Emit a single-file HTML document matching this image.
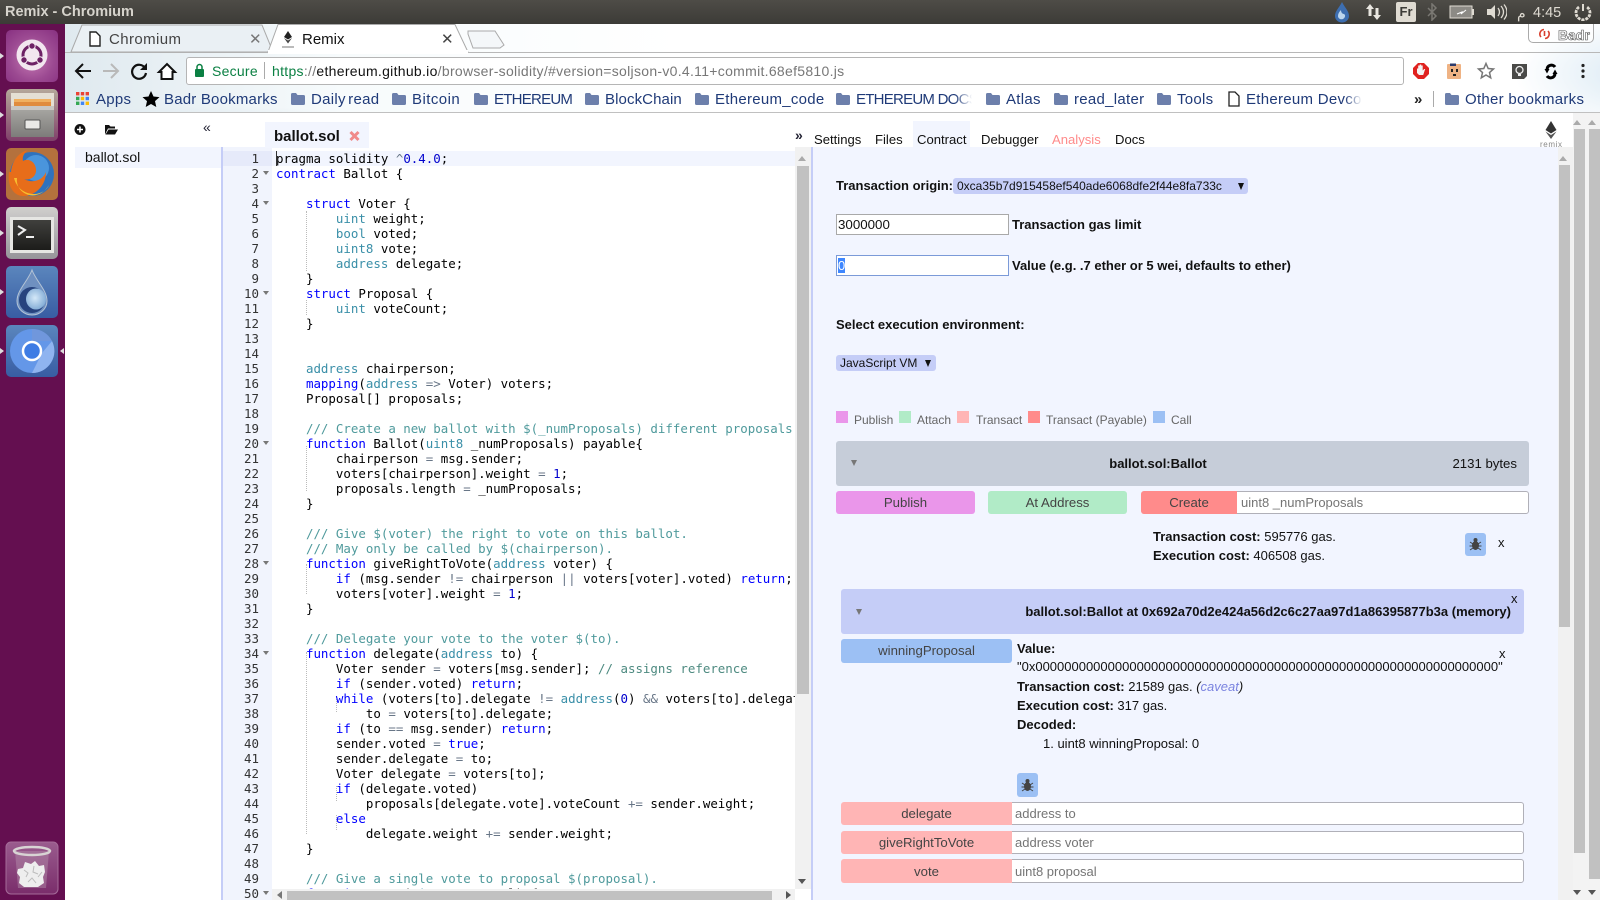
<!DOCTYPE html>
<html><head><meta charset="utf-8"><title>Remix - Chromium</title>
<style>
html,body{margin:0;padding:0;width:1600px;height:900px;overflow:hidden;background:#fff}
body{font-family:"Liberation Sans",sans-serif;position:relative}
.a{position:absolute}
.t{position:absolute;white-space:nowrap;line-height:20px;height:20px;font-size:13px;color:#111}
.b{font-weight:bold}
.bm{position:absolute;white-space:nowrap;line-height:20px;top:90px;font-size:15px;letter-spacing:.28px;color:#1f3a78}
.f{position:absolute;top:93px;width:14px;height:12px}
.c{position:absolute;left:276px;height:15px;line-height:15px;white-space:pre;font-family:"DejaVu Sans Mono",monospace;font-size:12.45px;color:#000}
.n{position:absolute;left:223px;width:36px;text-align:right;height:15px;line-height:15px;font-family:"DejaVu Sans Mono",monospace;font-size:12.45px;color:#333}
.k{color:#0000ff}.y{color:#3a8fa8}.d{color:#4f9a9c}.o{color:#687687}.m{color:#0000cd}.g{color:#4d8a80}
.fd{position:absolute;left:263px;width:0;height:0;border-left:3px solid transparent;border-right:3px solid transparent;border-top:4px solid #777}
.gd{position:absolute;width:0;border-left:1px dotted #bbb}
.btn{position:absolute;text-align:center;color:#444;font-size:13.2px;line-height:23px;height:23px;border-radius:3px}
.inp{position:absolute;background:#fff;border:1px solid #b0b0b8;box-sizing:border-box;color:#757575;font-size:13px;line-height:21px;border-radius:0 3px 3px 0}
.ar{position:absolute;width:0;height:0;border-left:4px solid transparent;border-right:4px solid transparent}
.tb{position:absolute;white-space:nowrap;line-height:20px;height:20px;font-size:13.1px;color:#111;top:130px}
</style></head><body>

<!-- top panel -->
<div class="a" style="left:0;top:0;width:1600px;height:24px;background:linear-gradient(#4e4c47,#3c3b37)"></div>
<div class="t" style="left:5px;top:2px;font-size:14.5px;font-weight:bold;color:#d6d3cc">Remix - Chromium</div>
<svg class="a" style="left:1332px;top:1px" width="20" height="22" viewBox="0 0 20 22"><path d="M10 1C7 7 3 10 3 15a7 6.500 0 0 0 14 0C17 10 13 7 10 1z" fill="#3d6eb0"/><path d="M9 9c-2 2-3 4-3 6s2 4 5 3c2-1 3-4 1-5-2 0-3-2-3-4z" fill="#bcd6ee"/></svg>
<svg class="a" style="left:1364px;top:3px" width="20" height="18" viewBox="0 0 20 18"><path d="M6 1l4 5H7.500v7h-3V6H2zM13 17l-4-5h2.500V5h3v7H17z" fill="#e8e6e0"/></svg>
<div class="a" style="left:1396px;top:2px;width:20px;height:20px;background:#dfdbd2;border-radius:2px;color:#3c3b37;font-size:13px;font-weight:bold;text-align:center;line-height:20px">Fr</div>
<svg class="a" style="left:1426px;top:3px" width="12" height="18" viewBox="0 0 12 18"><path d="M2 5l8 8-4 4V1l4 4-8 8" fill="none" stroke="#7a7873" stroke-width="1.500"/></svg>
<svg class="a" style="left:1449px;top:5px" width="26" height="14" viewBox="0 0 26 14"><rect x="1" y="1" width="22" height="12" fill="#8c8a85" stroke="#dfdbd2"/><rect x="23" y="4" width="2" height="6" fill="#dfdbd2"/><path d="M8 9l5-2-1 2 5-4" stroke="#fff" fill="none"/></svg>
<svg class="a" style="left:1486px;top:4px" width="21" height="16" viewBox="0 0 21 16"><path d="M1 5h4l4-4v14l-4-4H1z" fill="#dfdbd2"/><path d="M12 4q3 4 0 8M15 2q5 6 0 12M18 0.500q6 7.500 0 15" stroke="#dfdbd2" fill="none" stroke-width="1.300"/></svg>
<div class="t" style="left:1517px;top:3px;font-size:14px;color:#dfdbd2;font-family:'Liberation Sans','Noto Sans CJK SC',sans-serif">م</div>
<div class="t" style="left:1533px;top:3px;font-size:14.5px;color:#dfdbd2">4:45</div>
<svg class="a" style="left:1574px;top:3px" width="18" height="18" viewBox="0 0 18 18"><path d="M9 1v7" stroke="#dfdbd2" stroke-width="2"/><path d="M5 4a7 7 0 1 0 8 0" fill="none" stroke="#dfdbd2" stroke-width="2.800" stroke-dasharray="3 1"/></svg>

<!-- launcher -->
<div class="a" style="left:0;top:24px;width:65px;height:876px;background:#640f50"></div>
<svg class="a" style="left:0;top:24px" width="65" height="876" viewBox="0 24 65 876">
<defs><radialGradient id="ub" cx=".5" cy=".55" r=".7"><stop offset="0" stop-color="#c77bb5"/><stop offset=".6" stop-color="#9c4a92"/><stop offset="1" stop-color="#8a3383"/></radialGradient>
<linearGradient id="fi" x1="0" y1="0" x2="0" y2="1"><stop offset="0" stop-color="#b5a89a"/><stop offset="1" stop-color="#80406a"/></linearGradient>
<linearGradient id="bl" x1="0" y1="0" x2="0" y2="1"><stop offset="0" stop-color="#5b86bd"/><stop offset="1" stop-color="#385da3"/></linearGradient>
<linearGradient id="tm" x1="0" y1="0" x2="0" y2="1"><stop offset="0" stop-color="#d0cfcd"/><stop offset="1" stop-color="#96949a"/></linearGradient>
<linearGradient id="sc" x1="0" y1="0" x2="0" y2="1"><stop offset="0" stop-color="#40403d"/><stop offset="1" stop-color="#1c1c1a"/></linearGradient>
<linearGradient id="cb" x1="0" y1="0" x2="0" y2="1"><stop offset="0" stop-color="#a5a4a0"/><stop offset="1" stop-color="#7d7c7a"/></linearGradient>
<radialGradient id="dl" cx=".45" cy=".45" r=".6"><stop offset="0" stop-color="#d4e8f8"/><stop offset="1" stop-color="#7fa9d4"/></radialGradient>
<linearGradient id="tr" x1="0" y1="0" x2="0" y2="1"><stop offset="0" stop-color="#9a5c8e"/><stop offset="1" stop-color="#7a2d6b"/></linearGradient></defs>
<rect x="6" y="30" width="52" height="52" rx="5" fill="url(#ub)"/>
<circle cx="32" cy="55" r="15.500" fill="#f2e6ef"/><circle cx="32" cy="55" r="9" fill="none" stroke="#6d2165" stroke-width="3"/><circle cx="32" cy="46" r="3.200" fill="#6d2165" stroke="#f2e6ef"/><circle cx="24" cy="60" r="3.200" fill="#6d2165" stroke="#f2e6ef"/><circle cx="40" cy="60" r="3.200" fill="#6d2165" stroke="#f2e6ef"/>
<rect x="6" y="89" width="52" height="52" rx="5" fill="url(#fi)"/>
<rect x="11" y="93" width="43" height="17" fill="#e4dfd4"/><rect x="14" y="99" width="37" height="3" fill="#f0b060"/><rect x="14" y="102" width="37" height="4" fill="#e08c3e"/><rect x="11" y="106" width="43" height="4" fill="#c9c7c3"/><rect x="11" y="110" width="43" height="27" fill="url(#cb)"/><rect x="25" y="120" width="15" height="9" rx="1" fill="#e9e9e7" stroke="#555"/>
<rect x="6" y="148" width="52" height="52" rx="5" fill="#b4713d"/>
<circle cx="32" cy="174" r="22" fill="#2f72bd"/><circle cx="36" cy="168" r="13" fill="#4a95dc"/>
<path d="M11 172c1-11 8-20 17-22-4 3-6 7-5 11 5-3 12 0 13 8 1 7-6 12-12 10 9 5 19 1 22-7 0 14-11 24-23 24-8 0-16-8-14-24z" fill="#e76d1a"/><path d="M14 178c2 9 10 16 20 16 7 0 13-4 15-9-4 7-12 12-20 10-8-2-13-9-12-17z" fill="#f8bd2e"/>
<rect x="6" y="207" width="52" height="52" rx="5" fill="url(#tm)"/>
<rect x="10" y="217" width="44" height="36" fill="#e6e6e3"/><rect x="13" y="220" width="38" height="30" fill="url(#sc)"/><path d="M18 226l7 4-7 5" fill="none" stroke="#eee" stroke-width="2"/><rect x="26" y="236" width="8" height="2" fill="#eee"/>
<rect x="6" y="266" width="52" height="52" rx="5" fill="url(#bl)"/>
<path d="M32 270c-4 11-15 20-15 31a15 14 0 0 0 30 0c0-11-11-20-15-31z" fill="#6f90c0" stroke="#b4c4d6"/><ellipse cx="32" cy="300" rx="13" ry="13" fill="#27437e"/><ellipse cx="36" cy="299" rx="10" ry="10.500" fill="url(#dl)"/>
<rect x="6" y="325" width="52" height="52" rx="5" fill="url(#bl)"/>
<circle cx="32" cy="351" r="22" fill="#6497e8"/><path d="M32 329a22 22 0 0 1 20 12H32z" fill="#7097dc"/><path d="M52 341a22 22 0 0 1-20 32l10-20z" fill="#8fb4f0"/><circle cx="32" cy="351" r="9" fill="#3e7ce4" stroke="#fff" stroke-width="2.500"/>
<rect x="6" y="842" width="52" height="52" rx="5" fill="url(#tr)" stroke="#a56b99"/>
<path d="M15 851h34l-3 37H18z" fill="#b592ad" opacity=".45"/><ellipse cx="32" cy="851" rx="18" ry="4" fill="none" stroke="#d8d4d4" stroke-width="2.500"/>
<path d="M18 869l5-1 2-6 6 2 4-3 4 5 5-1 1 7-2 5 1 6-6 4H24l-5-4 1-6-3-4z" fill="#eeeeee"/><path d="M24 870l4 3-2 4M34 866l-1 6 5 2M28 882l4-4 4 5M42 872l-4 5" fill="none" stroke="#bdbdbd"/>
<path d="M0 53l4 3-4 3zM0 112l4 3-4 3zM0 171l4 3-4 3zM0 230l4 3-4 3zM0 289l4 3-4 3zM0 348l4 3-4 3z" fill="#ddd"/><path d="M64 348l-4 3 4 3z" fill="#ddd"/>
</svg>

<!-- chrome background -->
<div class="a" style="left:65px;top:24px;width:1535px;height:89px;background:radial-gradient(ellipse 130px 60px at 1580px 50px,#d8e8f3,transparent),radial-gradient(ellipse 60px 40px at 1480px 108px,#eef4f8,transparent),radial-gradient(ellipse 200px 26px at 150px 108px,#dbe6ec,transparent),linear-gradient(90deg,#dfe9ef,#f7fbfc 18%,#fff 40%)"></div>
<div class="a" style="left:65px;top:112px;width:1535px;height:1px;background:#c0c0c0"></div>
<div class="a" style="left:65px;top:52px;width:1535px;height:1px;background:#b8b8b8"></div>

<svg class="a" style="left:65px;top:24px" width="440" height="30" viewBox="65 24 440 30">
<path d="M71 52L82 25H262L271 47 268 52z" fill="#eaf0f4" stroke="#aaa"/>
<path d="M268 52l10-27.500H455l13 27.500" fill="#fff" stroke="#aaa"/>
<rect x="268" y="50" width="200" height="4" fill="#fff"/>
<path d="M468 31h27l9 14-4 3h-27l-5-14z" fill="#f4f7f9" stroke="#aaa"/>
</svg>
<svg class="a" style="left:89px;top:31px" width="12" height="16" viewBox="0 0 12 16"><path d="M1 1h6l4 4v10H1z" fill="#fff" stroke="#222" stroke-width="1.400"/></svg>
<div class="t" style="left:109px;top:30px;font-size:15px;letter-spacing:.4px;color:#444">Chromium</div>
<div class="t" style="left:249px;top:30px;font-size:15px;color:#777">✕</div>
<svg class="a" style="left:280px;top:31px" width="16" height="18" viewBox="0 0 16 18"><path d="M8 0l4 6-4 2.500L4 6z" fill="#222"/><path d="M8 9.500l4-2.500-4 5.500L4 7z" fill="#444"/><rect x="2" y="15" width="12" height="2" fill="#bbb"/></svg>
<div class="t" style="left:302px;top:30px;font-size:15px;color:#111">Remix</div>
<div class="t" style="left:441px;top:30px;font-size:15px;color:#444">✕</div>

<!-- Badr -->
<div class="a" style="left:1528px;top:24px;width:66px;height:19px;box-sizing:border-box;border:1px solid #aaa;border-top:0;border-radius:0 0 5px 5px;background:rgba(255,255,255,.75)"></div>
<svg class="a" style="left:1538px;top:28px" width="13" height="12" viewBox="0 0 13 12"><path d="M3 9A4.500 4.500 0 0 1 6 1.500M10 3a4.500 4.500 0 0 1-3 7.500M6.500 3v5" fill="none" stroke="#d8402f" stroke-width="1.600"/></svg>
<div class="t" style="left:1558px;top:25px;font-size:14px;font-weight:bold;color:#fff;-webkit-text-stroke:.6px #555">Badr</div>

<!-- toolbar -->
<svg class="a" style="left:74px;top:61px" width="108" height="20" viewBox="0 0 108 20">
<path d="M17 10H3M9 3l-7 7 7 7" fill="none" stroke="#111" stroke-width="2"/>
<path d="M29 10h14M37 3l7 7-7 7" fill="none" stroke="#b9b9b9" stroke-width="2"/>
<path d="M71 7a7 7 0 1 0 1 5" fill="none" stroke="#111" stroke-width="2.200"/><path d="M73 2v7h-7z" fill="#111"/>
<path d="M85 11l8-8 8 8h-2.500v7h-11v-7z" fill="#fff" stroke="#111" stroke-width="2"/>
</svg>
<div class="a" style="left:186px;top:57px;width:1218px;height:28px;box-sizing:border-box;background:#fff;border:1px solid #b5b5b5;border-radius:3px"></div>
<svg class="a" style="left:194px;top:63px" width="11" height="15" viewBox="0 0 11 15"><path d="M3 6V4a2.500 2.500 0 0 1 5 0v2" fill="none" stroke="#0b8043" stroke-width="1.500"/><rect x="1" y="6" width="9" height="8" rx="1" fill="#0b8043"/></svg>
<div class="t" style="left:212px;top:61px;font-size:14px;color:#0b8043;letter-spacing:.25px">Secure</div>
<div class="a" style="left:264px;top:62px;width:1px;height:17px;background:#aaa"></div>
<div class="t" style="left:272px;top:61px;font-size:14px;letter-spacing:.295px;color:#777"><span style="color:#0b8043">https</span><span style="color:#777">://</span><span style="color:#111">ethereum.github.io</span>/browser-solidity/#version=soljson-v0.4.11+commit.68ef5810.js</div>

<svg class="a" style="left:1412px;top:61px" width="180" height="20" viewBox="0 0 180 20">
<path d="M6 2h6l5 5v6l-5 5H6l-5-5V7z" fill="#e0221f"/><path d="M5 12V7.500h1.200V10 4.500h1.500V9 3.500h1.500V9 4.500h1.500V9.500l1.500-1.500h1l-2 6H7z" fill="#f3f3f3"/>
<rect x="35" y="3" width="14" height="15" rx="1" fill="#efb384"/><path d="M38 2.500h6V5h-6z" fill="#2d3b6b"/><rect x="39" y="8" width="2" height="3" fill="#222"/><rect x="44" y="8" width="2" height="3" fill="#222"/><rect x="41" y="13" width="3" height="2" fill="#222"/>
<path d="M74 2.500l2.200 5 5.300.5-4 3.500 1.200 5.300L74 14l-4.700 2.800 1.200-5.300-4-3.500 5.300-.5z" fill="#fff" stroke="#777" stroke-width="1.500"/>
<path d="M100 3h15v12l-3 3h-12z" fill="#4a4a48"/><circle cx="107.500" cy="9" r="3.500" fill="none" stroke="#eee" stroke-width="1.300"/><rect x="106" y="13" width="3" height="2" fill="#eee"/>
<path d="M143 6C141 3 135 3.500 135 9M135 15C137 18 143 17.500 143 12" fill="none" stroke="#000" stroke-width="3"/><path d="M132.500 8h5l-2.500 4.500zM140.500 13h5L143 8.500z" fill="#000"/>
<circle cx="171" cy="4.500" r="1.600" fill="#222"/><circle cx="171" cy="10" r="1.600" fill="#222"/><circle cx="171" cy="15.500" r="1.600" fill="#222"/>
</svg>

<!-- bookmarks -->
<svg class="a" style="left:76px;top:92px" width="13" height="13" viewBox="0 0 13 13"><rect x="0" y="0" width="3.400" height="3.400" fill="#ea4335"/><rect x="4.800" y="0" width="3.400" height="3.400" fill="#ea4335"/><rect x="9.600" y="0" width="3.400" height="3.400" fill="#ea4335"/><rect x="0" y="4.800" width="3.400" height="3.400" fill="#34a853"/><rect x="4.800" y="4.800" width="3.400" height="3.400" fill="#fbbc05"/><rect x="9.600" y="4.800" width="3.400" height="3.400" fill="#4285f4"/><rect x="0" y="9.600" width="3.400" height="3.400" fill="#34a853"/><rect x="4.800" y="9.600" width="3.400" height="3.400" fill="#4285f4"/><rect x="9.600" y="9.600" width="3.400" height="3.400" fill="#fbbc05"/></svg>
<div class="bm" style="left:96px">Apps</div>
<svg class="a" style="left:142px;top:90px" width="18" height="18" viewBox="0 0 18 18"><path d="M9 1l2.500 5.500 6 .6-4.500 4 1.300 5.900L9 14l-5.300 3 1.300-5.900-4.500-4 6-.6z" fill="#000"/></svg>
<div class="bm" style="left:164px;letter-spacing:.2px">Badr Bookmarks</div>
<svg width="0" height="0" style="position:absolute"><defs><symbol id="fo" viewBox="0 0 14 12"><path d="M0 1.500Q0 0 1.500 0H5l1.500 2H12.500Q14 2 14 3.500V10.500Q14 12 12.500 12H1.500Q0 12 0 10.500z" fill="#6c7fab"/></symbol></defs></svg>
<svg class="f" style="left:291px"><use href="#fo"/></svg><div class="bm" style="left:311px;word-spacing:-2px">Daily read</div>
<svg class="f" style="left:392px"><use href="#fo"/></svg><div class="bm" style="left:412px;letter-spacing:.45px">Bitcoin</div>
<svg class="f" style="left:474px"><use href="#fo"/></svg><div class="bm" style="left:494px;letter-spacing:-.75px">ETHEREUM</div>
<svg class="f" style="left:585px"><use href="#fo"/></svg><div class="bm" style="left:605px;letter-spacing:.1px">BlockChain</div>
<svg class="f" style="left:695px"><use href="#fo"/></svg><div class="bm" style="left:715px">Ethereum_code</div>
<svg class="f" style="left:836px"><use href="#fo"/></svg><div class="bm" style="left:856px;width:116px;overflow:hidden;letter-spacing:-.75px;-webkit-mask-image:linear-gradient(90deg,#000 85%,transparent)">ETHEREUM DOCS</div>
<svg class="f" style="left:986px"><use href="#fo"/></svg><div class="bm" style="left:1006px">Atlas</div>
<svg class="f" style="left:1054px"><use href="#fo"/></svg><div class="bm" style="left:1074px">read_later</div>
<svg class="f" style="left:1157px"><use href="#fo"/></svg><div class="bm" style="left:1177px">Tools</div>
<svg class="a" style="left:1228px;top:91px" width="12" height="16" viewBox="0 0 12 16"><path d="M1 1h6l4 4v10H1z" fill="#fff" stroke="#222" stroke-width="1.300"/></svg>
<div class="bm" style="left:1246px;width:116px;overflow:hidden;-webkit-mask-image:linear-gradient(90deg,#000 85%,transparent)">Ethereum Devcon</div>
<div class="t" style="left:1414px;top:90px;font-size:15px;font-weight:bold;color:#222">»</div>
<div class="a" style="left:1433px;top:91px;width:1px;height:16px;background:#aaa"></div>
<svg class="f" style="left:1445px"><use href="#fo"/></svg><div class="bm" style="left:1465px">Other bookmarks</div>

<!-- file panel -->
<svg class="a" style="left:74px;top:123px" width="52" height="13" viewBox="0 0 52 13"><circle cx="6" cy="6.500" r="5.500" fill="#111"/><path d="M6 3.500v6M3 6.500h6" stroke="#fff" stroke-width="1.500"/><path d="M31 2h4l1.500 1.500H41v2H34l-3 6z" fill="#111"/><path d="M34.500 6.500H44l-3 5H31.500z" fill="#111"/></svg>
<div class="t" style="left:203px;top:117px;font-size:14px;color:#223">«</div>
<div class="a" style="left:75px;top:147px;width:146px;height:21px;background:#f2f5fe"></div>
<div class="t" style="left:85px;top:147px;font-size:14px;color:#111">ballot.sol</div>
<div class="a" style="left:221px;top:147px;width:2px;height:753px;background:#c5cdf7"></div>
<div class="a" style="left:223px;top:147px;width:49px;height:753px;background:#f1f4fd"></div>
<div class="a" style="left:265px;top:122px;width:104px;height:26px;background:#f2f5fe"></div>
<div class="t" style="left:274px;top:127px;font-size:15px;font-weight:bold;color:#111">ballot.sol</div>
<svg class="a" style="left:349px;top:130px" width="11" height="12" viewBox="0 0 11 12"><path d="M1.500 2L9.500 10M9.500 2L1.500 10" stroke="#f08a8a" stroke-width="3"/></svg>

<!-- editor -->
<div class="a" style="left:223px;top:151px;width:49px;height:15px;background:#e6eafa"></div>
<div class="a" style="left:272px;top:151px;width:523px;height:15px;background:#f2f5fe"></div>
<div class="a" style="left:276px;top:151px;width:1px;height:15px;background:#333"></div>
<div id="code" class="a" style="left:0;top:0;width:795px;height:889px;overflow:hidden">
<div class="gd" style="left:306px;top:211px;height:60px"></div><div class="gd" style="left:306px;top:300px;height:15px"></div><div class="gd" style="left:306px;top:446px;height:45px"></div>
<div class="gd" style="left:306px;top:564px;height:30px"></div><div class="gd" style="left:306px;top:652px;height:182px"></div>
<div class="gd" style="left:336px;top:697px;height:15px"></div><div class="gd" style="left:336px;top:786px;height:15px"></div><div class="gd" style="left:336px;top:815px;height:15px"></div>
<div class="n" style="top:151px">1</div><div class="c" style="top:151px">pragma solidity <span class="o">^</span><span class="m">0.4.0</span>;</div>
<div class="n" style="top:166px">2</div><div class="c" style="top:166px"><span class="k">contract</span> Ballot {</div><div class="fd" style="top:171px"></div>
<div class="n" style="top:181px">3</div>
<div class="n" style="top:196px">4</div><div class="c" style="top:196px">    <span class="k">struct</span> Voter {</div><div class="fd" style="top:201px"></div>
<div class="n" style="top:211px">5</div><div class="c" style="top:211px">        <span class="y">uint</span> weight;</div>
<div class="n" style="top:226px">6</div><div class="c" style="top:226px">        <span class="y">bool</span> voted;</div>
<div class="n" style="top:241px">7</div><div class="c" style="top:241px">        <span class="y">uint8</span> vote;</div>
<div class="n" style="top:256px">8</div><div class="c" style="top:256px">        <span class="y">address</span> delegate;</div>
<div class="n" style="top:271px">9</div><div class="c" style="top:271px">    }</div>
<div class="n" style="top:286px">10</div><div class="c" style="top:286px">    <span class="k">struct</span> Proposal {</div><div class="fd" style="top:291px"></div>
<div class="n" style="top:301px">11</div><div class="c" style="top:301px">        <span class="y">uint</span> voteCount;</div>
<div class="n" style="top:316px">12</div><div class="c" style="top:316px">    }</div>
<div class="n" style="top:331px">13</div>
<div class="n" style="top:346px">14</div>
<div class="n" style="top:361px">15</div><div class="c" style="top:361px">    <span class="y">address</span> chairperson;</div>
<div class="n" style="top:376px">16</div><div class="c" style="top:376px">    <span class="k">mapping</span>(<span class="y">address</span> <span class="o">=&gt;</span> Voter) voters;</div>
<div class="n" style="top:391px">17</div><div class="c" style="top:391px">    Proposal[] proposals;</div>
<div class="n" style="top:406px">18</div>
<div class="n" style="top:421px">19</div><div class="c d" style="top:421px">    /// Create a new ballot with $(_numProposals) different proposals.</div>
<div class="n" style="top:436px">20</div><div class="c" style="top:436px">    <span class="k">function</span> Ballot(<span class="y">uint8</span> _numProposals) payable{</div><div class="fd" style="top:441px"></div>
<div class="n" style="top:451px">21</div><div class="c" style="top:451px">        chairperson <span class="o">=</span> msg.sender;</div>
<div class="n" style="top:466px">22</div><div class="c" style="top:466px">        voters[chairperson].weight <span class="o">=</span> <span class="m">1</span>;</div>
<div class="n" style="top:481px">23</div><div class="c" style="top:481px">        proposals.length <span class="o">=</span> _numProposals;</div>
<div class="n" style="top:496px">24</div><div class="c" style="top:496px">    }</div>
<div class="n" style="top:511px">25</div>
<div class="n" style="top:526px">26</div><div class="c d" style="top:526px">    /// Give $(voter) the right to vote on this ballot.</div>
<div class="n" style="top:541px">27</div><div class="c d" style="top:541px">    /// May only be called by $(chairperson).</div>
<div class="n" style="top:556px">28</div><div class="c" style="top:556px">    <span class="k">function</span> giveRightToVote(<span class="y">address</span> voter) {</div><div class="fd" style="top:561px"></div>
<div class="n" style="top:571px">29</div><div class="c" style="top:571px">        <span class="k">if</span> (msg.sender <span class="o">!=</span> chairperson <span class="o">||</span> voters[voter].voted) <span class="k">return</span>;</div>
<div class="n" style="top:586px">30</div><div class="c" style="top:586px">        voters[voter].weight <span class="o">=</span> <span class="m">1</span>;</div>
<div class="n" style="top:601px">31</div><div class="c" style="top:601px">    }</div>
<div class="n" style="top:616px">32</div>
<div class="n" style="top:631px">33</div><div class="c d" style="top:631px">    /// Delegate your vote to the voter $(to).</div>
<div class="n" style="top:646px">34</div><div class="c" style="top:646px">    <span class="k">function</span> delegate(<span class="y">address</span> to) {</div><div class="fd" style="top:651px"></div>
<div class="n" style="top:661px">35</div><div class="c" style="top:661px">        Voter sender <span class="o">=</span> voters[msg.sender]; <span class="g">// assigns reference</span></div>
<div class="n" style="top:676px">36</div><div class="c" style="top:676px">        <span class="k">if</span> (sender.voted) <span class="k">return</span>;</div>
<div class="n" style="top:691px">37</div><div class="c" style="top:691px">        <span class="k">while</span> (voters[to].delegate <span class="o">!=</span> <span class="y">address</span>(<span class="m">0</span>) <span class="o">&amp;&amp;</span> voters[to].delegate <span class="o">!=</span> msg.sender)</div>
<div class="n" style="top:706px">38</div><div class="c" style="top:706px">            to <span class="o">=</span> voters[to].delegate;</div>
<div class="n" style="top:721px">39</div><div class="c" style="top:721px">        <span class="k">if</span> (to <span class="o">==</span> msg.sender) <span class="k">return</span>;</div>
<div class="n" style="top:736px">40</div><div class="c" style="top:736px">        sender.voted <span class="o">=</span> <span class="k">true</span>;</div>
<div class="n" style="top:751px">41</div><div class="c" style="top:751px">        sender.delegate <span class="o">=</span> to;</div>
<div class="n" style="top:766px">42</div><div class="c" style="top:766px">        Voter delegate <span class="o">=</span> voters[to];</div>
<div class="n" style="top:781px">43</div><div class="c" style="top:781px">        <span class="k">if</span> (delegate.voted)</div>
<div class="n" style="top:796px">44</div><div class="c" style="top:796px">            proposals[delegate.vote].voteCount <span class="o">+=</span> sender.weight;</div>
<div class="n" style="top:811px">45</div><div class="c" style="top:811px">        <span class="k">else</span></div>
<div class="n" style="top:826px">46</div><div class="c" style="top:826px">            delegate.weight <span class="o">+=</span> sender.weight;</div>
<div class="n" style="top:841px">47</div><div class="c" style="top:841px">    }</div>
<div class="n" style="top:856px">48</div>
<div class="n" style="top:871px">49</div><div class="c d" style="top:871px">    /// Give a single vote to proposal $(proposal).</div>
<div class="c" style="top:886px">    <span class="k">function</span> vote(<span class="y">uint8</span> proposal) {</div>
</div>
<div class="n" style="top:886px">50</div><div class="fd" style="top:891px"></div>
<!-- editor scrollbars -->
<div class="a" style="left:795px;top:147px;width:16px;height:742px;background:#f1f1f1"></div>
<div class="ar" style="left:798px;top:156px;border-bottom:5px solid #aaa"></div>
<div class="a" style="left:797px;top:166px;width:12px;height:528px;background:#c1c1c1"></div>
<div class="ar" style="left:798px;top:879px;border-top:5px solid #555"></div>
<div class="a" style="left:272px;top:889px;width:523px;height:11px;background:#f1f1f1"></div>
<div class="a" style="left:287px;top:891px;width:485px;height:9px;background:#c1c1c1"></div>
<div class="a" style="left:277px;top:891px;width:0;height:0;border-top:4px solid transparent;border-bottom:4px solid transparent;border-right:5px solid #777"></div>
<div class="a" style="left:786px;top:891px;width:0;height:0;border-top:4px solid transparent;border-bottom:4px solid transparent;border-left:5px solid #555"></div>

<!-- right panel -->
<div class="a" style="left:811px;top:147px;width:2px;height:753px;background:#c5cdf7"></div>
<div class="a" style="left:813px;top:147px;width:745px;height:753px;background:#f2f5ff"></div>
<div class="a" style="left:913px;top:121px;width:57px;height:26px;background:#f2f5fe"></div>
<div class="t" style="left:795px;top:125px;font-size:14px;font-weight:bold;color:#223">»</div>
<div class="tb" style="left:814px">Settings</div>
<div class="tb" style="left:875px">Files</div>
<div class="tb" style="left:917px">Contract</div>
<div class="tb" style="left:981px">Debugger</div>
<div class="tb" style="left:1052px;color:#ff8b8b">Analysis</div>
<div class="tb" style="left:1115px">Docs</div>
<svg class="a" style="left:1540px;top:120px" width="22" height="26" viewBox="0 0 22 26"><path d="M11 1l5.500 9L11 13.500 5.500 10z" fill="#333"/><path d="M11 15l5.500-3.500L11 19l-5.500-7.500z" fill="#555"/></svg>
<div class="t" style="left:1540px;top:135px;font-size:8px;letter-spacing:.6px;color:#888">remix</div>

<!-- outer scrollbars -->
<div class="a" style="left:1558px;top:147px;width:15px;height:753px;background:#f1f1f1"></div>
<div class="ar" style="left:1559px;top:156px;border-bottom:5px solid #aaa"></div>
<div class="a" style="left:1559px;top:165px;width:11px;height:462px;background:#c1c1c1"></div>
<div class="a" style="left:1573px;top:113px;width:27px;height:787px;background:#f3f3f3"></div>
<div class="ar" style="left:1573px;top:120px;border-bottom:5px solid #aaa"></div>
<div class="ar" style="left:1588px;top:120px;border-bottom:5px solid #aaa"></div>
<div class="a" style="left:1574px;top:129px;width:11px;height:724px;background:#c1c1c1"></div>
<div class="a" style="left:1589px;top:129px;width:11px;height:750px;background:#c1c1c1"></div>
<div class="ar" style="left:1573px;top:890px;border-top:5px solid #555"></div>
<div class="ar" style="left:1588px;top:890px;border-top:5px solid #555"></div>

<!-- form -->
<div class="t b" style="left:836px;top:176px">Transaction origin:</div>
<div class="a" style="left:953px;top:178px;width:295px;height:16px;background:#c5cdf7;border-radius:3px"></div>
<div class="t" style="left:957px;top:176px;font-size:12px">0xca35b7d915458ef540ade6068dfe2f44e8fa733c</div>
<div class="ar" style="left:1238px;top:183px;border-left-width:3px;border-right-width:3px;border-top:7px solid #111"></div>
<div class="a" style="left:836px;top:214px;width:173px;height:21px;box-sizing:border-box;border:1px solid #a9a9a9;background:#fff"></div>
<div class="t" style="left:838px;top:215px;font-size:13.33px">3000000</div>
<div class="t b" style="left:1012px;top:215px">Transaction gas limit</div>
<div class="a" style="left:836px;top:255px;width:173px;height:21px;box-sizing:border-box;border:1px solid #7b9ad8;background:#fff"></div>
<div class="a" style="left:838px;top:258px;width:7px;height:15px;background:#3f87ff"></div>
<div class="t" style="left:838px;top:256px;color:#fff">0</div>
<div class="t b" style="left:1012px;top:256px">Value (e.g. .7 ether or 5 wei, defaults to ether)</div>
<div class="t b" style="left:836px;top:315px">Select execution environment:</div>
<div class="a" style="left:836px;top:355px;width:100px;height:16px;background:#c5cdf7;border-radius:3px"></div>
<div class="t" style="left:840px;top:353px;font-size:12px">JavaScript VM</div>
<div class="ar" style="left:925px;top:360px;border-left-width:3px;border-right-width:3px;border-top:7px solid #111"></div>

<div class="a" style="left:836px;top:411px;width:12px;height:12px;background:#ea96ea"></div>
<div class="t" style="left:854px;top:410px;font-size:12px;color:#666">Publish</div>
<div class="a" style="left:899px;top:411px;width:12px;height:12px;background:#b1ebc7"></div>
<div class="t" style="left:917px;top:410px;font-size:12px;color:#666">Attach</div>
<div class="a" style="left:957px;top:411px;width:12px;height:12px;background:#ffb5b5"></div>
<div class="t" style="left:976px;top:410px;font-size:12px;color:#666">Transact</div>
<div class="a" style="left:1028px;top:411px;width:12px;height:12px;background:#ff8b8b"></div>
<div class="t" style="left:1046px;top:410px;font-size:12px;color:#666">Transact (Payable)</div>
<div class="a" style="left:1153px;top:411px;width:12px;height:12px;background:#9cc0f4"></div>
<div class="t" style="left:1171px;top:410px;font-size:12px;color:#666">Call</div>

<div class="a" style="left:836px;top:441px;width:693px;height:45px;background:#c6cdd9;border-radius:3px"></div>
<div class="ar" style="left:851px;top:460px;border-left-width:3px;border-right-width:3px;border-top:6px solid #777"></div>
<div class="t b" style="left:1058px;top:454px;width:200px;text-align:center">ballot.sol:Ballot</div>
<div class="t" style="left:1417px;top:454px;width:100px;text-align:right;font-size:13.2px">2131 bytes</div>

<div class="btn" style="left:836px;top:491px;width:139px;background:#ea96ea">Publish</div>
<div class="btn" style="left:988px;top:491px;width:139px;background:#b1ebc7">At Address</div>
<div class="inp" style="left:1235px;top:491px;width:294px;height:23px;padding-left:5px">uint8 _numProposals</div>
<div class="btn" style="left:1141px;top:491px;width:96px;background:#ff8b8b;border-radius:3px 0 0 3px">Create</div>

<div class="t" style="left:1153px;top:527px"><b>Transaction cost:</b> 595776 gas.</div>
<div class="t" style="left:1153px;top:546px"><b>Execution cost:</b> 406508 gas.</div>
<div class="a" style="left:1465px;top:533px;width:21px;height:23px;background:#9cc0f4;border-radius:3px"></div>
<svg class="a" style="left:1469px;top:537px" width="13" height="14" viewBox="0 0 13 14"><ellipse cx="6.500" cy="8.500" rx="3.500" ry="4.500" fill="#444"/><circle cx="6.500" cy="3" r="2" fill="#444"/><path d="M1 5l3 2M12 5L9 7M0.500 9h3M12.500 9h-3M1 13l3-2M12 13l-3-2" stroke="#444"/></svg>
<div class="t" style="left:1498px;top:533px">x</div>

<div class="a" style="left:841px;top:589px;width:683px;height:45px;background:#c5cdf7;border-radius:3px"></div>
<div class="ar" style="left:856px;top:609px;border-left-width:3px;border-right-width:3px;border-top:6px solid #777"></div>
<div class="t b" style="left:1011px;top:602px;width:500px;text-align:right">ballot.sol:Ballot at 0x692a70d2e424a56d2c6c27aa97d1a86395877b3a (memory)</div>
<div class="t" style="left:1511px;top:589px">x</div>

<div class="btn" style="left:841px;top:639px;width:171px;height:24px;line-height:24px;background:#9cc0f4">winningProposal</div>
<div class="t b" style="left:1017px;top:639px">Value:</div>
<div class="t" style="left:1499px;top:644px">x</div>
<div class="t" style="left:1017px;top:657px">"0x0000000000000000000000000000000000000000000000000000000000000000"</div>
<div class="t" style="left:1017px;top:677px"><b>Transaction cost:</b> 21589 gas. <i>(<span style="color:#7b84e0">caveat</span>)</i></div>
<div class="t" style="left:1017px;top:696px"><b>Execution cost:</b> 317 gas.</div>
<div class="t b" style="left:1017px;top:715px">Decoded:</div>
<div class="t" style="left:1043px;top:734px">1. uint8 winningProposal: 0</div>
<div class="a" style="left:1017px;top:773px;width:21px;height:24px;background:#9cc0f4;border-radius:3px"></div>
<svg class="a" style="left:1021px;top:778px" width="13" height="14" viewBox="0 0 13 14"><ellipse cx="6.500" cy="8.500" rx="3.500" ry="4.500" fill="#444"/><circle cx="6.500" cy="3" r="2" fill="#444"/><path d="M1 5l3 2M12 5L9 7M0.500 9h3M12.500 9h-3M1 13l3-2M12 13l-3-2" stroke="#444"/></svg>

<div class="inp" style="left:1010px;top:802px;width:514px;height:23px;padding-left:4px">address to</div>
<div class="btn" style="left:841px;top:802px;width:171px;background:#ffb5b5;border-radius:3px 0 0 3px">delegate</div>
<div class="inp" style="left:1010px;top:831px;width:514px;height:23px;padding-left:4px">address voter</div>
<div class="btn" style="left:841px;top:831px;width:171px;background:#ffb5b5;border-radius:3px 0 0 3px">giveRightToVote</div>
<div class="inp" style="left:1010px;top:859px;width:514px;height:24px;padding-left:4px;line-height:23px">uint8 proposal</div>
<div class="btn" style="left:841px;top:859px;width:171px;height:24px;line-height:25px;background:#ffb5b5;border-radius:3px 0 0 3px">vote</div>
</body></html>
